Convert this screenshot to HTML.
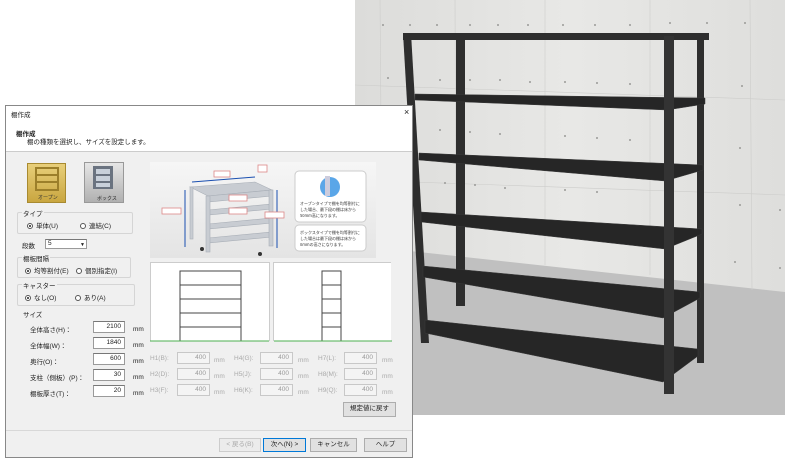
<!DOCTYPE html>
<html><head><meta charset="utf-8"><style>
*{margin:0;padding:0;box-sizing:border-box}
body{width:785px;height:462px;overflow:hidden;background:#fff;position:relative;font-family:"Liberation Sans","Noto Sans CJK JP",sans-serif;font-size:7px;color:#222}
.a{position:absolute}
.inp{position:absolute;background:#fff;border:1px solid #9a9a9a;border-top-color:#777;text-align:right;padding-right:3px;font-size:6.5px;line-height:10px;height:12px}
.dis{background:#f4f4f4;border-color:#c8c8c8;color:#999}
.btn{position:absolute;border:1px solid #adadad;background:#e1e1e1;text-align:center;font-size:6.5px;line-height:12px;height:14px}
.grp{position:absolute;border:1px solid #d5d5d5;border-radius:2px}
.gl{position:absolute;top:-5px;left:4px;background:#f0f0f0;padding:0 1px;font-size:6.5px}
.rad{display:inline-block;width:6px;height:6px;border:1px solid #555;border-radius:50%;vertical-align:-1px;margin-right:3px;background:#fff;position:relative}
.rad.on::after{content:"";position:absolute;left:1px;top:1px;width:2px;height:2px;background:#222;border-radius:50%}
.lbl{position:absolute;font-size:6.5px}
.g{color:#aaa}
</style></head><body>
<svg class="a" style="left:355px;top:0" width="430" height="415" viewBox="355 0 430 415">
<defs><linearGradient id="w" x1="0" y1="0" x2="1" y2="0"><stop offset="0" stop-color="#dcdcda"/><stop offset="0.5" stop-color="#e8e8e6"/><stop offset="1" stop-color="#dededc"/></linearGradient></defs>
<rect x="355" y="0" width="430" height="415" fill="url(#w)"/>
<polygon points="355,245 785,292 785,415 355,415" fill="#c0c0c0"/>
<g stroke="#cdcdcb" stroke-width="0.6">
<line x1="380" y1="0" x2="382" y2="250"/><line x1="455" y1="0" x2="456" y2="255"/><line x1="545" y1="0" x2="545" y2="265"/><line x1="650" y1="0" x2="650" y2="275"/><line x1="750" y1="0" x2="752" y2="290"/>
<line x1="355" y1="85" x2="785" y2="100"/><line x1="355" y1="180" x2="785" y2="195"/></g>
<g fill="#9a9a98">
<circle cx="383" cy="25" r="1"/><circle cx="410" cy="25" r="1"/><circle cx="437" cy="25" r="1"/><circle cx="470" cy="25" r="1"/><circle cx="498" cy="25" r="1"/><circle cx="528" cy="25" r="1"/><circle cx="563" cy="25" r="1"/><circle cx="595" cy="25" r="1"/><circle cx="630" cy="25" r="1"/><circle cx="670" cy="23" r="1"/><circle cx="707" cy="23" r="1"/><circle cx="745" cy="23" r="1"/>
<circle cx="388" cy="78" r="1"/><circle cx="440" cy="80" r="1"/><circle cx="470" cy="80" r="1"/><circle cx="500" cy="80" r="1"/><circle cx="530" cy="82" r="1"/><circle cx="565" cy="82" r="1"/><circle cx="597" cy="83" r="1"/><circle cx="630" cy="84" r="1"/><circle cx="742" cy="86" r="1"/>
<circle cx="440" cy="130" r="1"/><circle cx="470" cy="132" r="1"/><circle cx="500" cy="134" r="1"/><circle cx="565" cy="136" r="1"/><circle cx="597" cy="138" r="1"/><circle cx="630" cy="140" r="1"/><circle cx="740" cy="148" r="1"/>
<circle cx="445" cy="183" r="1"/><circle cx="475" cy="185" r="1"/><circle cx="505" cy="188" r="1"/><circle cx="565" cy="190" r="1"/><circle cx="597" cy="192" r="1"/><circle cx="740" cy="205" r="1"/><circle cx="780" cy="210" r="1"/><circle cx="735" cy="262" r="1"/><circle cx="780" cy="268" r="1"/></g>
<g fill="#2e2e2e">
<rect x="456" y="36" width="9" height="270"/>
<rect x="697" y="33" width="7" height="330"/>
<polygon points="403,33 709,33 709,40 403,40"/>
<polygon points="403,33 411,33 429,343 421,343"/>
</g>
<g fill="#262626" stroke="#3a3a3a" stroke-width="0.5">
<polygon points="415,94 705,98 705,104 667,110 415,100"/>
<polygon points="419,153 703,165 703,170 665,181 419,160"/>
<polygon points="421,212 702,229 702,234 665,249 421,222"/>
<polygon points="423,266 700,292 700,298 663,318 423,277"/>
<polygon points="425,320 698,349 698,356 663,382 425,333"/>
</g>
<rect x="664" y="36" width="10" height="358" fill="#333"/>
</svg>
<div class="a" style="left:5px;top:105px;width:408px;height:353px;background:#f0f0f0;border:1px solid #888">
<div class="a" style="left:0;top:0;width:406px;height:46px;background:#fff;border-bottom:1px solid #ccc"></div>
<div class="lbl" style="left:5px;top:3px">棚作成</div>
<div class="lbl" style="left:398px;top:1px;font-size:9px">×</div>
<div class="lbl" style="left:10px;top:22px;font-weight:bold">棚作成</div>
<div class="lbl" style="left:21px;top:30px">棚の種類を選択し、サイズを設定します。</div>
</div>
<div class="a" style="left:27px;top:163px;width:39px;height:40px;background:linear-gradient(#e8cf7a,#c9a640);border:1px solid #a88a30"></div>
<svg class="a" style="left:33px;top:166px" width="28" height="28"><g fill="none" stroke="#9c7f2a" stroke-width="2"><rect x="3" y="2" width="22" height="22"/><line x1="3" y1="9" x2="25" y2="9"/><line x1="3" y1="16" x2="25" y2="16"/></g></svg>
<div class="lbl" style="left:38px;top:194px;font-size:5px;color:#333">オープン</div>
<div class="a" style="left:84px;top:162px;width:40px;height:41px;background:linear-gradient(#e6e6e6,#b0b0b0);border:1px solid #999"></div>
<svg class="a" style="left:91px;top:165px" width="26" height="26"><rect x="2" y="1" width="20" height="23" fill="#6a7380"/><g fill="#c8d0da"><rect x="5" y="4" width="14" height="5"/><rect x="5" y="11" width="14" height="5"/><rect x="5" y="18" width="14" height="4"/></g></svg>
<div class="lbl" style="left:97px;top:195px;font-size:5px">ボックス</div>
<div class="grp" style="left:17px;top:212px;width:116px;height:22px"><span class="gl">タイプ</span></div>
<div class="lbl" style="left:27px;top:220px"><span class="rad on"></span>単体(U)</div>
<div class="lbl" style="left:80px;top:220px"><span class="rad"></span>連結(C)</div>
<div class="lbl" style="left:22px;top:240px">段数</div>
<div class="inp" style="left:45px;top:239px;width:42px;height:10px;text-align:left;padding-left:2px;line-height:8px">5<span style="position:absolute;right:1px;top:1px;font-size:5px">▼</span></div>
<div class="grp" style="left:17px;top:257px;width:114px;height:21px"><span class="gl">棚板間隔</span></div>
<div class="lbl" style="left:25px;top:265px"><span class="rad on"></span>均等割付(E)</div>
<div class="lbl" style="left:76px;top:265px"><span class="rad"></span>個別指定(I)</div>
<div class="grp" style="left:17px;top:284px;width:118px;height:22px"><span class="gl">キャスター</span></div>
<div class="lbl" style="left:25px;top:292px"><span class="rad on"></span>なし(O)</div>
<div class="lbl" style="left:75px;top:292px"><span class="rad"></span>あり(A)</div>
<div class="lbl" style="left:23px;top:309px">サイズ</div>
<div class="lbl" style="left:30px;top:324px">全体高さ(H)：</div><div class="inp" style="left:93px;top:321px;width:32px">2100</div><div class="lbl" style="left:133px;top:326px">mm</div>
<div class="lbl" style="left:30px;top:340px">全体幅(W)：</div><div class="inp" style="left:93px;top:337px;width:32px">1840</div><div class="lbl" style="left:133px;top:342px">mm</div>
<div class="lbl" style="left:30px;top:356px">奥行(O)：</div><div class="inp" style="left:93px;top:353px;width:32px">600</div><div class="lbl" style="left:133px;top:358px">mm</div>
<div class="lbl" style="left:30px;top:372px">支柱（側板）(P)：</div><div class="inp" style="left:93px;top:369px;width:32px">30</div><div class="lbl" style="left:133px;top:374px">mm</div>
<div class="lbl" style="left:30px;top:388px">棚板厚さ(T)：</div><div class="inp" style="left:93px;top:385px;width:32px">20</div><div class="lbl" style="left:133px;top:390px">mm</div>
<div class="lbl g" style="left:150px;top:355px">H1(B):</div><div class="inp dis" style="left:177px;top:352px;width:33px">400</div><div class="lbl g" style="left:214px;top:357px">mm</div>
<div class="lbl g" style="left:234px;top:355px">H4(G):</div><div class="inp dis" style="left:260px;top:352px;width:33px">400</div><div class="lbl g" style="left:298px;top:357px">mm</div>
<div class="lbl g" style="left:318px;top:355px">H7(L):</div><div class="inp dis" style="left:344px;top:352px;width:33px">400</div><div class="lbl g" style="left:382px;top:357px">mm</div>
<div class="lbl g" style="left:150px;top:371px">H2(D):</div><div class="inp dis" style="left:177px;top:368px;width:33px">400</div><div class="lbl g" style="left:214px;top:373px">mm</div>
<div class="lbl g" style="left:234px;top:371px">H5(J):</div><div class="inp dis" style="left:260px;top:368px;width:33px">400</div><div class="lbl g" style="left:298px;top:373px">mm</div>
<div class="lbl g" style="left:318px;top:371px">H8(M):</div><div class="inp dis" style="left:344px;top:368px;width:33px">400</div><div class="lbl g" style="left:382px;top:373px">mm</div>
<div class="lbl g" style="left:150px;top:387px">H3(F):</div><div class="inp dis" style="left:177px;top:384px;width:33px">400</div><div class="lbl g" style="left:214px;top:389px">mm</div>
<div class="lbl g" style="left:234px;top:387px">H6(K):</div><div class="inp dis" style="left:260px;top:384px;width:33px">400</div><div class="lbl g" style="left:298px;top:389px">mm</div>
<div class="lbl g" style="left:318px;top:387px">H9(Q):</div><div class="inp dis" style="left:344px;top:384px;width:33px">400</div><div class="lbl g" style="left:382px;top:389px">mm</div>
<div class="btn" style="left:343px;top:402px;width:53px;height:15px">規定値に戻す</div>
<div class="a" style="left:6px;top:430px;width:406px;height:1px;background:#d8d8d8"></div>
<div class="btn" style="left:219px;top:438px;width:42px;color:#aaa;border-color:#ccc;background:#ececec">&lt; 戻る(B)</div>
<div class="btn" style="left:263px;top:438px;width:43px;border-color:#0078d7">次へ(N) &gt;</div>
<div class="btn" style="left:310px;top:438px;width:47px">キャンセル</div>
<div class="btn" style="left:364px;top:438px;width:43px">ヘルプ</div>
<div class="a" style="left:150px;top:162px;width:226px;height:96px;background:linear-gradient(#f6f6f6,#e4e4e4)"></div>
<svg class="a" style="left:150px;top:162px" width="226" height="96">
<g fill="#c8ccd2" stroke="#a8aeb6" stroke-width="0.6">
<polygon points="40,25 105,20 122,28 58,34"/>
<polygon points="58,34 122,28 122,34 58,40"/><polygon points="58,48 122,42 122,47 58,53"/><polygon points="58,62 122,56 122,61 58,67"/><polygon points="58,76 122,70 122,75 58,81"/>
<rect x="56" y="34" width="4" height="56"/><rect x="119" y="28" width="4" height="56"/><rect x="40" y="25" width="3" height="52"/></g>
<g stroke="#1a4fb0" stroke-width="1"><line x1="42" y1="20" x2="105" y2="15"/><line x1="127" y1="28" x2="127" y2="86"/><line x1="35" y1="28" x2="35" y2="85"/></g>
<g fill="#fff" stroke="#d88" stroke-width="0.8"><rect x="64" y="9" width="16" height="6"/><rect x="108" y="3" width="9" height="7"/><rect x="79" y="33" width="18" height="6"/><rect x="79" y="46" width="18" height="6"/><rect x="12" y="46" width="19" height="6"/><rect x="115" y="50" width="19" height="6"/></g>
<circle cx="52" cy="87" r="2" fill="#333"/><circle cx="110" cy="92" r="2" fill="#333"/>
<rect x="145" y="9" width="71" height="51" rx="4" fill="#fff" stroke="#ccc"/>
<circle cx="180" cy="25" r="10" fill="#5aa6e8"/><rect x="175" y="14" width="5" height="20" fill="#ccd"/>
<rect x="145" y="63" width="71" height="26" rx="4" fill="#fff" stroke="#ccc"/>
<text x="150" y="43" font-size="4" fill="#333" font-family="Noto Sans CJK JP">オープンタイプで棚を均等割付に</text>
<text x="150" y="49" font-size="4" fill="#333" font-family="Noto Sans CJK JP">した場合、最下段の棚は床から</text>
<text x="150" y="55" font-size="4" fill="#333" font-family="Noto Sans CJK JP">50mm高になります。</text>
<text x="150" y="72" font-size="4" fill="#333" font-family="Noto Sans CJK JP">ボックスタイプで棚を均等割付に</text>
<text x="150" y="78" font-size="4" fill="#333" font-family="Noto Sans CJK JP">した場合は最下段の棚は床から</text>
<text x="150" y="84" font-size="4" fill="#333" font-family="Noto Sans CJK JP">0mmの高さになります。</text>
</svg>
<div class="a" style="left:150px;top:262px;width:120px;height:79px;background:#fff;border:1px solid #ccc;border-bottom:none"></div>
<div class="a" style="left:273px;top:262px;width:118px;height:79px;background:#fff;border:1px solid #ccc;border-bottom:none;border-right:none"></div>
<svg class="a" style="left:150px;top:262px" width="242" height="80">
<g fill="none" stroke="#444" stroke-width="1"><rect x="30" y="9" width="61" height="70"/><line x1="30" y1="23" x2="91" y2="23"/><line x1="30" y1="37" x2="91" y2="37"/><line x1="30" y1="51" x2="91" y2="51"/><line x1="30" y1="65" x2="91" y2="65"/>
<rect x="172" y="9" width="19" height="70"/><line x1="172" y1="23" x2="191" y2="23"/><line x1="172" y1="37" x2="191" y2="37"/><line x1="172" y1="51" x2="191" y2="51"/><line x1="172" y1="65" x2="191" y2="65"/></g>
<line x1="0" y1="79" x2="119" y2="79" stroke="#4caf50"/><line x1="124" y1="79" x2="242" y2="79" stroke="#4caf50"/>
</svg>
</body></html>
